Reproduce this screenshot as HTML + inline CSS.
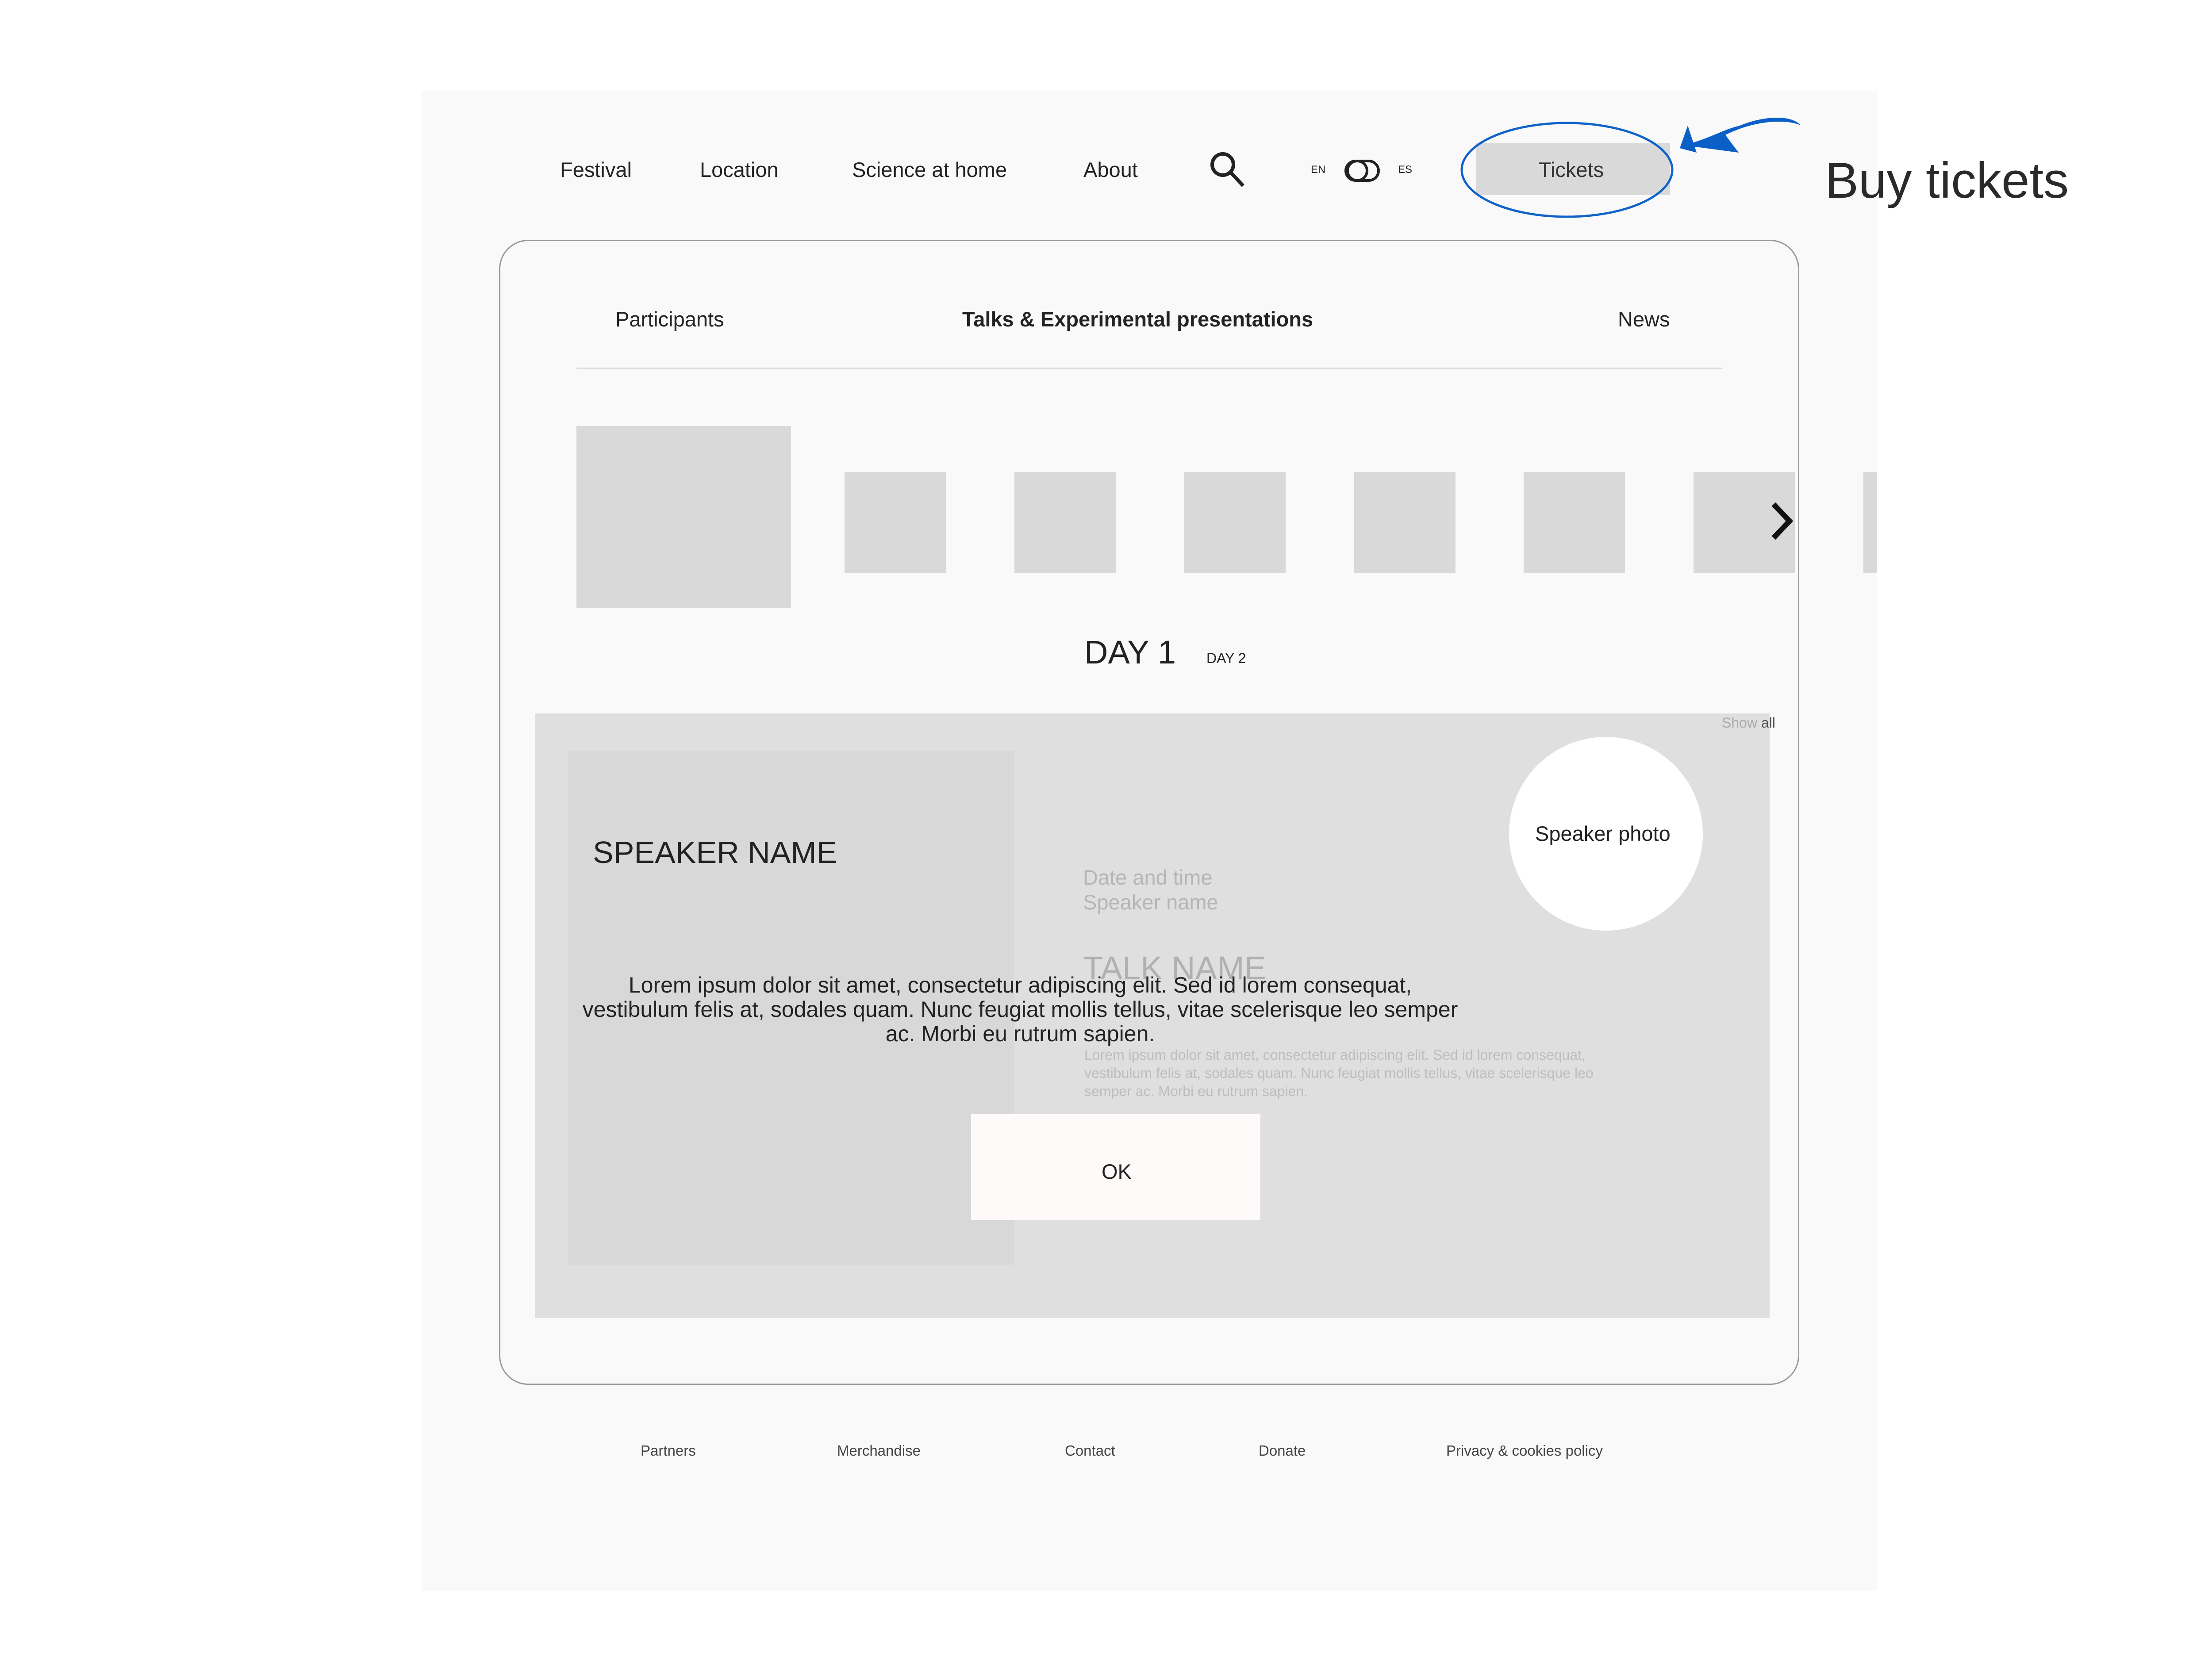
<!DOCTYPE html>
<html><head><meta charset="utf-8"><style>
*{margin:0;padding:0;box-sizing:border-box}
body{width:5280px;height:3762px;background:#fff;position:relative;overflow:hidden;font-family:"Liberation Sans",sans-serif;color:#222}
.a{position:absolute;white-space:nowrap;line-height:1}
.sq{position:absolute;background:#d9d9d9}
</style></head><body>
<div style="position:absolute;left:953px;top:205px;width:3290px;height:3391px;background:#f9f9f9"></div>

<div class="a" style="left:1266px;top:360px;font-size:47px">Festival</div>
<div class="a" style="left:1582px;top:360px;font-size:47px">Location</div>
<div class="a" style="left:1926px;top:360px;font-size:47px">Science at home</div>
<div class="a" style="left:2449px;top:360px;font-size:47px">About</div>
<svg style="position:absolute;left:2730px;top:338px" width="90" height="90" viewBox="0 0 90 90"><circle cx="34" cy="34" r="24" fill="none" stroke="#222" stroke-width="8"/><line x1="52" y1="52" x2="80" y2="82" stroke="#222" stroke-width="8"/></svg>
<div class="a" style="left:2963px;top:372px;font-size:24px">EN</div>
<svg style="position:absolute;left:3038px;top:358px" width="84" height="56" viewBox="0 0 84 56"><rect x="4" y="6" width="74" height="44" rx="22" fill="none" stroke="#222" stroke-width="6"/><circle cx="30" cy="28" r="22" fill="none" stroke="#222" stroke-width="6"/></svg>
<div class="a" style="left:3160px;top:372px;font-size:24px">ES</div>
<div style="position:absolute;left:3337px;top:323px;width:438px;height:118px;background:#d9d9d9"></div>
<div class="a" style="left:3478px;top:360px;font-size:47px;color:#333">Tickets</div>
<svg style="position:absolute;left:3290px;top:240px" width="820" height="270" viewBox="3290 240 820 270"><ellipse cx="3542" cy="384" rx="238" ry="106" fill="none" stroke="#0f63c8" stroke-width="5"/><path d="M3796 327 C3830 330 3900 290 3930 285 C3990 260 4050 260 4070 283 C4040 270 3970 270 3900 305 L3930 345 Z" fill="#0a60c6"/><path d="M3797 335 L3815 284 L3835 345 Z" fill="#0a60c6"/></svg>
<div class="a" style="left:4125px;top:352px;font-size:114px;color:#2a2a2a">Buy tickets</div>

<div style="position:absolute;left:1128px;top:542px;width:2939px;height:2589px;border:3px solid #999;border-radius:66px"></div>
<div class="a" style="left:1391px;top:698px;font-size:47px">Participants</div>
<div class="a" style="left:2175px;top:698px;font-size:47px;font-weight:bold">Talks &amp; Experimental presentations</div>
<div class="a" style="left:3657px;top:698px;font-size:47px">News</div>
<div style="position:absolute;left:1303px;top:831px;width:2589px;height:3px;background:#ddd"></div>

<div class="sq" style="left:1303px;top:963px;width:485px;height:411px"></div>
<div class="sq" style="left:1909px;top:1067px;width:229px;height:229px"></div>
<div class="sq" style="left:2293px;top:1067px;width:229px;height:229px"></div>
<div class="sq" style="left:2677px;top:1067px;width:229px;height:229px"></div>
<div class="sq" style="left:3061px;top:1067px;width:229px;height:229px"></div>
<div class="sq" style="left:3444px;top:1067px;width:229px;height:229px"></div>
<div class="sq" style="left:3828px;top:1067px;width:229px;height:229px"></div>
<div class="sq" style="left:4212px;top:1067px;width:31px;height:229px"></div>
<svg style="position:absolute;left:3995px;top:1130px" width="70" height="100" viewBox="0 0 70 100"><polyline points="14,10 50,48 14,86" fill="none" stroke="#111" stroke-width="12"/></svg>

<div class="a" style="left:2451px;top:1438px;font-size:74px">DAY 1</div>
<div class="a" style="left:2727px;top:1472px;font-size:32px">DAY 2</div>

<div style="position:absolute;left:1209px;top:1613px;width:2791px;height:1367px;background:#dfdfdf"></div>
<div class="a" style="left:3892px;top:1618px;font-size:32px;color:#aaa">Show <span style="color:#555">all</span></div>
<div style="position:absolute;left:1283px;top:1697px;width:1010px;height:1162px;background:#d8d8d8"></div>
<div class="a" style="left:1340px;top:1892px;font-size:70px">SPEAKER NAME</div>
<div style="position:absolute;left:3411px;top:1666px;width:438px;height:438px;border-radius:50%;background:#fff"></div>
<div class="a" style="left:3470px;top:1861px;font-size:47px">Speaker photo</div>
<div class="a" style="left:2448px;top:1956px;font-size:47px;color:#b5b5b5;line-height:56px">Date and time<br>Speaker name</div>
<div class="a" style="left:2448px;top:2152px;font-size:74px;color:#b0b0b0">TALK NAME</div>
<div class="a" style="left:2451px;top:2365px;font-size:32px;color:#bdbdbd;line-height:41px">Lorem ipsum dolor sit amet, consectetur adipiscing elit. Sed id lorem consequat,<br>vestibulum felis at, sodales quam. Nunc feugiat mollis tellus, vitae scelerisque leo<br>semper ac. Morbi eu rutrum sapien.</div>
<div class="a" style="left:1306px;top:2200px;width:2000px;text-align:center;font-size:50px;line-height:55px;color:#222">Lorem ipsum dolor sit amet, consectetur adipiscing elit. Sed id lorem consequat,<br>vestibulum felis at, sodales quam. Nunc feugiat mollis tellus, vitae scelerisque leo semper<br>ac. Morbi eu rutrum sapien.</div>
<div style="position:absolute;left:2195px;top:2519px;width:654px;height:239px;background:#fdfaf9"></div>
<div class="a" style="left:2490px;top:2625px;font-size:47px">OK</div>

<div class="a" style="left:1448px;top:3263px;font-size:33px;color:#444">Partners</div>
<div class="a" style="left:1892px;top:3263px;font-size:33px;color:#444">Merchandise</div>
<div class="a" style="left:2407px;top:3263px;font-size:33px;color:#444">Contact</div>
<div class="a" style="left:2845px;top:3263px;font-size:33px;color:#444">Donate</div>
<div class="a" style="left:3269px;top:3263px;font-size:33px;color:#444">Privacy &amp; cookies policy</div>
</body></html>
